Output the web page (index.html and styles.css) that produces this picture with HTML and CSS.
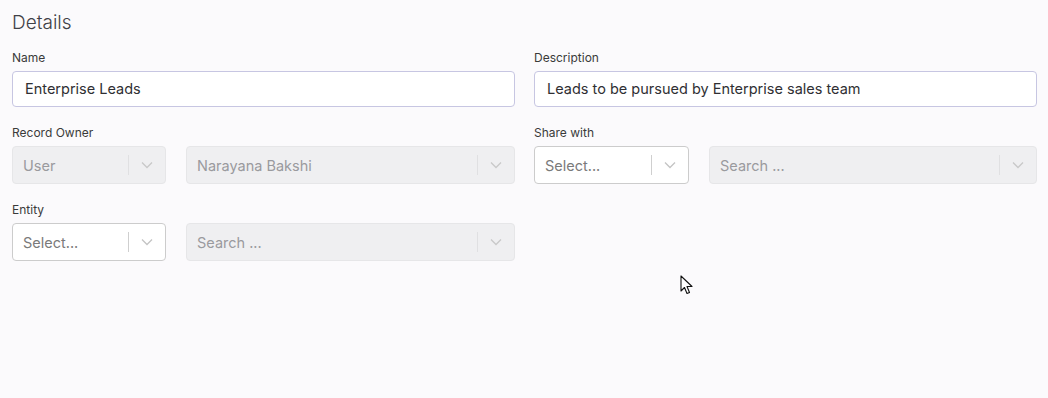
FILE: index.html
```html
<!DOCTYPE html>
<html lang="en">

<head>
    <meta charset="UTF-8">
    <meta name="viewport" content="width=device-width, initial-scale=1.0">
    <title>Details</title>
    <link rel="stylesheet" href="styles.css">
</head>

<body>
    <h2 class="title">Details</h2>

    <div class="grid">
        <div class="field">
            <label>Name</label>
            <div class="textbox">Enterprise Leads</div>
        </div>
        <div class="field">
            <label>Description</label>
            <div class="textbox">Leads to be pursued by Enterprise sales team</div>
        </div>

        <div class="field">
            <label>Record Owner</label>
            <div class="pair">
                <div class="select disabled">
                    <span class="value">User</span>
                    <span class="sep"></span>
                    <span class="arrow"><svg width="12" height="8" viewBox="0 0 12 8"><path d="M1 1.5 L6 6.5 L11 1.5" fill="none" stroke="#c9c9c9" stroke-width="1.3"/></svg></span>
                </div>
                <div class="select disabled">
                    <span class="value">Narayana Bakshi</span>
                    <span class="sep"></span>
                    <span class="arrow"><svg width="12" height="8" viewBox="0 0 12 8"><path d="M1 1.5 L6 6.5 L11 1.5" fill="none" stroke="#c9c9c9" stroke-width="1.3"/></svg></span>
                </div>
            </div>
        </div>
        <div class="field">
            <label>Share with</label>
            <div class="pair wide">
                <div class="select">
                    <span class="value">Select...</span>
                    <span class="sep"></span>
                    <span class="arrow"><svg width="12" height="8" viewBox="0 0 12 8"><path d="M1 1.5 L6 6.5 L11 1.5" fill="none" stroke="#c4c4c4" stroke-width="1.3"/></svg></span>
                </div>
                <div class="select disabled">
                    <span class="value">Search ...</span>
                    <span class="sep"></span>
                    <span class="arrow"><svg width="12" height="8" viewBox="0 0 12 8"><path d="M1 1.5 L6 6.5 L11 1.5" fill="none" stroke="#c9c9c9" stroke-width="1.3"/></svg></span>
                </div>
            </div>
        </div>

        <div class="field">
            <label>Entity</label>
            <div class="pair">
                <div class="select">
                    <span class="value">Select...</span>
                    <span class="sep"></span>
                    <span class="arrow"><svg width="12" height="8" viewBox="0 0 12 8"><path d="M1 1.5 L6 6.5 L11 1.5" fill="none" stroke="#c4c4c4" stroke-width="1.3"/></svg></span>
                </div>
                <div class="select disabled">
                    <span class="value">Search ...</span>
                    <span class="sep"></span>
                    <span class="arrow"><svg width="12" height="8" viewBox="0 0 12 8"><path d="M1 1.5 L6 6.5 L11 1.5" fill="none" stroke="#c9c9c9" stroke-width="1.3"/></svg></span>
                </div>
            </div>
        </div>
    </div>

    <svg class="cursor" width="14" height="22" viewBox="0 0 14 22">
        <path d="M1 1 L1 16 L4.5 12.5 L7 18.5 L9.5 17.5 L7 11.5 L12 11.5 Z" fill="#fff" stroke="#111" stroke-width="1.1" stroke-linejoin="round"/>
    </svg>
</body>

</html>
```

FILE: styles.css
```css
body {
    margin: 0;
    padding: 11px 11px 0 12px;
    font-family: 'Inter', 'Noto Sans', sans-serif;
    background-color: #fbfafc;
    color: #333;
    height: 387px;
    position: relative;
    overflow: hidden;
}

.title {
    margin: 0;
    font-size: 19px;
    font-weight: 300;
    color: #3f4147;
    line-height: 24px;
}

.grid {
    display: grid;
    grid-template-columns: 503px 503px;
    column-gap: 19px;
    row-gap: 18px;
    margin-top: 15px;
}

.field label {
    display: block;
    font-size: 12px;
    color: #3a3a3a;
    line-height: 15px;
    margin-bottom: 6px;
}

.textbox {
    height: 34px;
    border: 1px solid #c7c6e2;
    border-radius: 4px;
    background-color: #fff;
    padding: 0 12px;
    font-size: 14.5px;
    line-height: 34px;
    color: #2f2f33;
}

.pair {
    display: grid;
    grid-template-columns: 154px 1fr;
    column-gap: 20px;
}

.pair.wide {
    grid-template-columns: 155px 1fr;
}

.select {
    height: 36px;
    border: 1px solid #cccccc;
    border-radius: 4px;
    background-color: #fff;
    display: flex;
    align-items: center;
    font-size: 14.5px;
    color: #7a7a7a;
}

.select.disabled {
    background-color: #efeff1;
    border-color: #e6e6e8;
    color: #9a9a9e;
}

.select .value {
    flex: 1;
    padding-left: 10px;
}

.select .sep {
    width: 1px;
    height: 20px;
    background-color: #cfcfcf;
}

.select.disabled .sep {
    background-color: #e0e0e2;
}

.select .arrow {
    width: 36px;
    display: flex;
    justify-content: center;
    align-items: center;
}

.cursor {
    position: absolute;
    left: 680px;
    top: 275px;
}
```
